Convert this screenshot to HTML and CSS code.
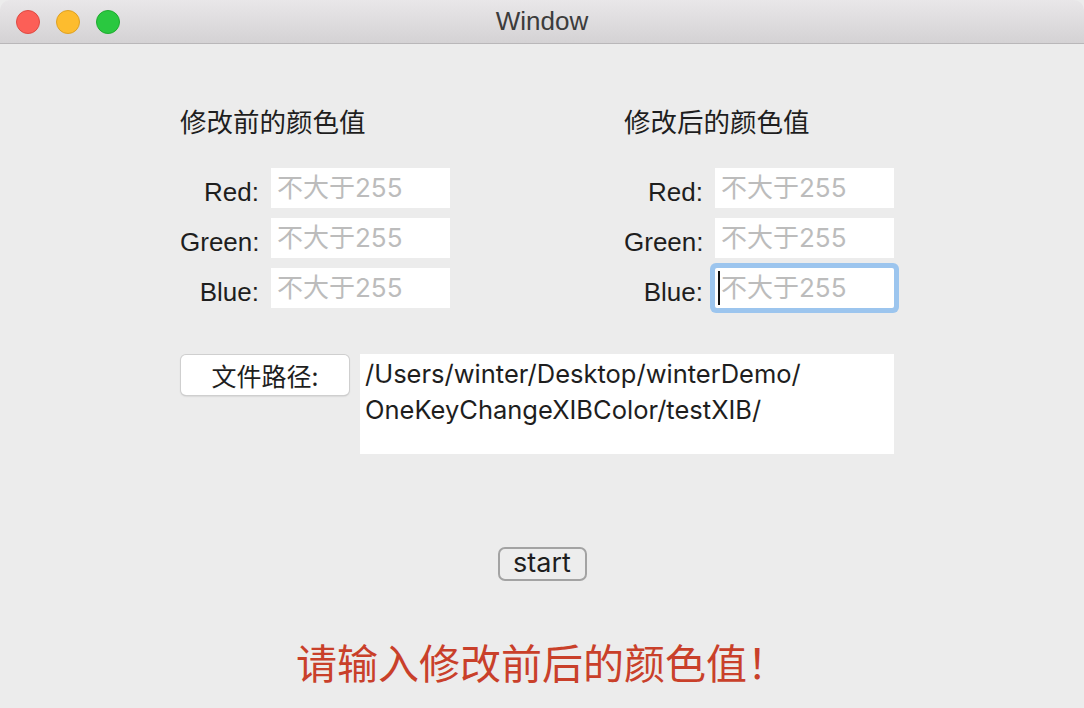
FILE: index.html
```html
<!DOCTYPE html>
<html lang="zh-CN">
<head>
  <meta charset="UTF-8" />
  <title>Window</title>
  <link rel="stylesheet" href="styles.css">
</head>
<body>

  <div class="title-bar">
    <div class="lights">
      <span class="light red"></span>
      <span class="light yellow"></span>
      <span class="light green"></span>
    </div>
    <div class="title">Window</div>
  </div>

  <div class="content">
    <div class="colors">
      <div class="color-col">
        <h3>修改前的颜色值</h3>
        <div class="field"><label>Red:</label><div class="input">不大于255</div></div>
        <div class="field"><label>Green:</label><div class="input">不大于255</div></div>
        <div class="field"><label>Blue:</label><div class="input">不大于255</div></div>
      </div>
      <div class="color-col">
        <h3>修改后的颜色值</h3>
        <div class="field"><label>Red:</label><div class="input">不大于255</div></div>
        <div class="field"><label>Green:</label><div class="input">不大于255</div></div>
        <div class="field"><label>Blue:</label><div class="input focused"><span class="caret"></span>不大于255</div></div>
      </div>
    </div>

    <div class="path-row">
      <button class="path-btn">文件路径:</button>
      <div class="path-box">/Users/winter/Desktop/winterDemo/<br>OneKeyChangeXIBColor/testXIB/</div>
    </div>

    <div class="start-row">
      <button class="start-btn">start</button>
    </div>

    <div class="message">请输入修改前后的颜色值！</div>
  </div>

</body>
</html>
```

FILE: styles.css
```css
body {
  margin: 0;
  background: #ececec;
  font-family: "Liberation Sans", "Noto Sans CJK SC", sans-serif;
  color: #1e1e1e;
  height: 708px;
  overflow: hidden;
}

.title-bar {
  height: 43px;
  background: linear-gradient(to bottom, #e9e7e9, #d4d2d4);
  border-bottom: 1px solid #b9b7b9;
  border-radius: 10px 10px 0 0;
  display: flex;
  align-items: center;
  position: relative;
}

.lights {
  display: flex;
  gap: 16px;
  padding-left: 16px;
}

.light {
  width: 24px;
  height: 24px;
  border-radius: 50%;
  box-sizing: border-box;
}

.light.red { background: #fc5f57; border: 1px solid #de4a42; }
.light.yellow { background: #fdbc2e; border: 1px solid #dea123; }
.light.green { background: #2ac840; border: 1px solid #1fab2f; }

.title {
  position: absolute;
  left: 0;
  right: 0;
  text-align: center;
  font-size: 26px;
  color: #3c3c3c;
}

.content {
  padding-top: 67px;
}

.colors {
  display: flex;
  gap: 174px;
  padding-left: 180px;
}

.color-col {
  width: 270px;
}

.color-col h3 {
  margin: -3px 0 34px 0;
  font-weight: normal;
  font-size: 26.5px;
  line-height: 26px;
  font-family: "Noto Sans CJK SC", sans-serif;
}

.field {
  display: flex;
  align-items: center;
  gap: 12px;
  margin-bottom: 10px;
}

.field label {
  width: 79px;
  text-align: right;
  font-size: 26px;
  padding-top: 9px;
}

.input {
  width: 179px;
  height: 40px;
  background: #fff;
  color: #bcbcbc;
  font-size: 26px;
  line-height: 38px;
  padding-left: 6px;
  padding-bottom: 1px;
  box-sizing: border-box;
  display: flex;
  align-items: center;
  font-family: "Inter", "Noto Sans CJK SC", sans-serif;
}

.input.focused {
  box-shadow: 0 0 0 5px #9cc5ee;
  border-radius: 2px;
  padding-left: 3px;
}

.caret {
  width: 2px;
  height: 34px;
  background: #111;
  margin-right: 1px;
}

.path-row {
  display: flex;
  align-items: flex-start;
  gap: 11px;
  padding-left: 181px;
  margin-top: 36px;
}

.path-btn {
  width: 168px;
  height: 40px;
  margin-top: 1px;
  background: #fff;
  border: none;
  border-radius: 5px;
  box-shadow: 0 0 0 1px #cfcfcf, 0 1px 2px rgba(0,0,0,0.25);
  font-family: "Noto Sans CJK SC", sans-serif;
  font-size: 25px;
  color: #1e1e1e;
  padding: 0;
}

.path-box {
  width: 534px;
  height: 100px;
  background: #fff;
  box-sizing: border-box;
  padding: 2px 5px;
  font-family: "Inter", sans-serif;
  font-size: 25.5px;
  line-height: 36px;
  color: #1e1e1e;
}

.start-row {
  display: flex;
  justify-content: center;
  margin-top: 93px;
}

.start-btn {
  width: 89px;
  height: 34px;
  background: #ededed;
  border: 2px solid #a3a3a3;
  border-radius: 7px;
  font-family: "Inter", sans-serif;
  font-size: 27px;
  color: #1e1e1e;
  padding: 0 0 2px 0;
  line-height: 28px;
}

.message {
  text-align: center;
  margin-top: 50px;
  font-family: "Noto Sans CJK SC", sans-serif;
  font-size: 41px;
  color: #c9402a;
}
```
